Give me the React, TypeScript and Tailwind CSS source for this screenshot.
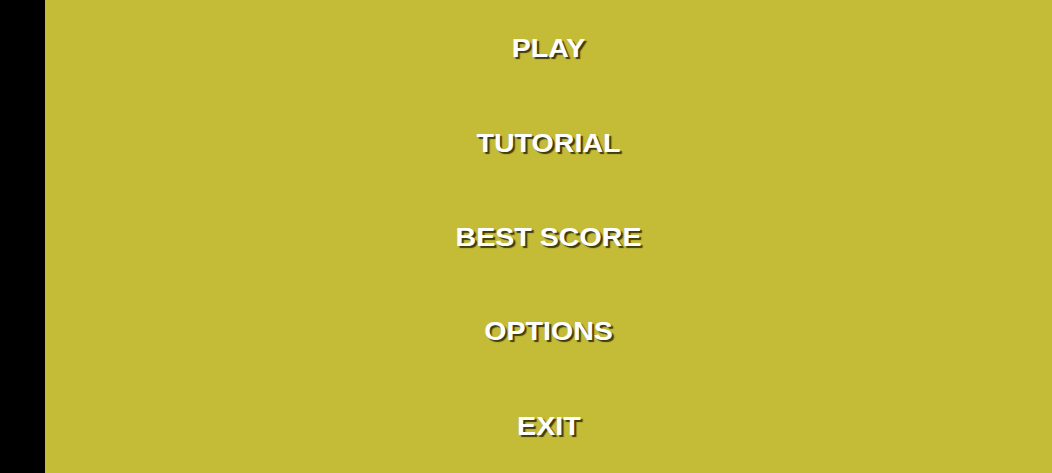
import React from "react";

const items = ["PLAY", "TUTORIAL", "BEST SCORE", "OPTIONS", "EXIT"];

export default function App() {
  return (
    <div className="flex h-[473px] w-[1052px] overflow-hidden">
      <div className="w-[45px] shrink-0 bg-black" />
      <div className="flex flex-1 flex-col bg-[#c4bc36] pt-[1px]">
        {items.map((t) => (
          <div key={t} className="flex flex-1 items-center justify-center">
            <span className="inline-block scale-x-[1.1] text-[26px] font-bold leading-none text-white [font-family:'Liberation_Sans',Arial,sans-serif] [text-shadow:2px_2px_1px_rgba(40,38,5,0.85)]">
              {t}
            </span>
          </div>
        ))}
      </div>
    </div>
  );
}
